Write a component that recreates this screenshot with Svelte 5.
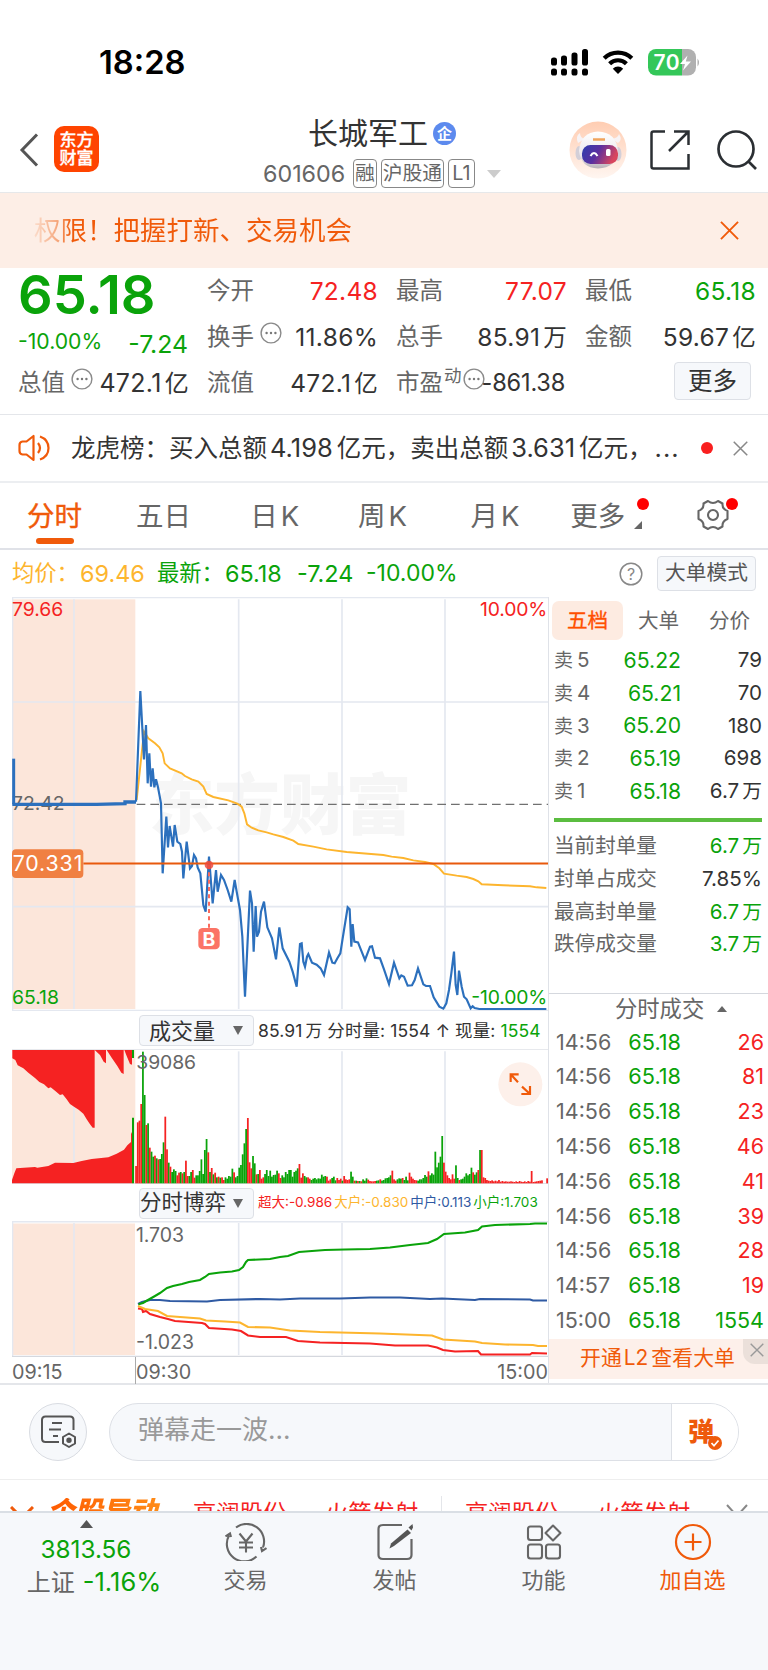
<script lang="ts">
  type Tone = 'up' | 'down' | 'plain';

  const quotes: { label: string; value: string; tone: Tone; info?: boolean; sup?: string }[][] = [
    [
      { label: '今开', value: '72.48', tone: 'up' },
      { label: '换手', value: '11.86%', tone: 'plain', info: true },
      { label: '流值', value: '472.1亿', tone: 'plain' }
    ],
    [
      { label: '最高', value: '77.07', tone: 'up' },
      { label: '总手', value: '85.91万', tone: 'plain' },
      { label: '市盈', value: '-861.38', tone: 'plain', info: true, sup: '动' }
    ],
    [
      { label: '最低', value: '65.18', tone: 'down' },
      { label: '金额', value: '59.67亿', tone: 'plain' }
    ]
  ];

  const asks = [
    ['5', '65.22', '79'],
    ['4', '65.21', '70'],
    ['3', '65.20', '180'],
    ['2', '65.19', '698'],
    ['1', '65.18', '6.7万']
  ];

  const limits: [string, string, Tone][] = [
    ['当前封单量', '6.7万', 'down'],
    ['封单占成交', '7.85%', 'plain'],
    ['最高封单量', '6.7万', 'down'],
    ['跌停成交量', '3.7万', 'down']
  ];

  const trades: [string, string, Tone][] = [
    ['14:56', '26', 'up'],
    ['14:56', '81', 'up'],
    ['14:56', '23', 'up'],
    ['14:56', '46', 'up'],
    ['14:56', '41', 'up'],
    ['14:56', '39', 'up'],
    ['14:56', '28', 'up'],
    ['14:57', '19', 'up'],
    ['15:00', '1554', 'down']
  ];

  const gridX = [222, 716, 1026, 1335];

  // chart units are a third of a pixel
  const priceLine =
    '408,635 421,303 432,508 438,405 443,580 448,490 453,590 458,535 463,592 468,568 474,592 483,640 488,850 499,680 504,772 509,708 519,770 524,705 532,755 541,762 546,785 550,865 560,755 570,835 576,828 582,795 588,805 593,832 601,850 610,945 617,965 627,800 638,940 648,840 653,905 663,855 672,870 683,900 694,935 704,870 710,905 720,960 727,1040 735,1220 750,902 756,940 761,1085 767,948 771,1040 777,1025 783,965 792,935 802,1012 816,1045 828,1108 838,1012 848,1075 868,1115 878,1145 890,1190 900,1062 905,1060 910,1115 915,1130 921,1100 925,1092 936,1118 950,1124 962,1135 972,1155 987,1088 997,1118 1004,1120 1013,1103 1021,1090 1028,1045 1043,952 1049,958 1054,1070 1058,1002 1063,1055 1074,1057 1085,1085 1095,1110 1110,1070 1116,1069 1125,1103 1140,1105 1152,1138 1167,1182 1182,1118 1198,1165 1204,1156 1212,1160 1223,1187 1236,1186 1244,1170 1254,1135 1270,1183 1278,1188 1290,1188 1301,1222 1318,1250 1330,1256 1339,1240 1347,1200 1354,1150 1362,1085 1367,1185 1372,1215 1377,1142 1385,1190 1392,1220 1400,1228 1412,1255 1418,1249 1424,1254 1438,1257 1639,1257';
  const averageLine =
    '410,630 432,425 445,445 465,460 478,472 488,490 494,520 510,535 545,550 555,558 575,568 595,575 610,590 620,612 640,621 685,631 712,641 725,650 733,670 741,703 755,713 775,721 800,727 820,733 850,741 880,752 895,762 940,770 980,778 1040,786 1150,795 1175,800 1210,804 1240,811 1275,816 1300,822 1318,835 1332,851 1370,857 1400,861 1420,867 1435,874 1445,883 1510,886 1590,889 1610,892 1639,894';

  // one bar per minute, negative means the price fell
  const volumes = [
    52, 183, 188, 238, -395, -265, 175, -180, 107, -95, -80, 83, -75, 72, -73, -88, -123, 200, 102, -62,
    50, -34, -42, -37, 24, 32, -34, 30, -34, 68, 22, -22, -34, 40, 17, -24, -24, -37, -72, -28,
    -100, -133, 93, -34, 46, -27, 32, -18, 20, -17, 18, 10, -18, -14, -22, -20, -44, 33, -18, -22,
    -47, -55, -87, -120, -163, 196, 63, 45, -82, -60, 27, -28, 40, 14, 18, -28, -40, -22, -38, -20,
    -25, -26, -38, 30, 16, -24, -18, -34, -28, -40, -40, -20, -34, -38, -45, 58, 17, 30, -22, -18,
    18, 14, -10, -14, -16, -12, -15, -14, -26, -20, -22, 20, 8, 12, -16, -20, -9, 16, 10, 14,
    -8, 22, 12, 10, 12, -35, -20, 8, -8, 7, -7, 6, -12, -8, -15, 11, 7, 6, 6, 7,
    -8, -9, 12, -8, -10, -15, -16, -18, -24, 38, 12, 8, -12, -15, -14, 16, -10, -20, -9, 32,
    20, 14, 10, 9, -8, -12, -12, -16, -25, -20, 36, -24, -30, -26, -95, -48, -62, -80, -142, 62,
    35, 24, 16, 12, 27, 14, -54, -16, 10, -12, -14, -20, -30, -24, -28, -47, 33, -26, -33, 40,
    -100, 100, 18, 16, 10, 8, 7, 9, 6, 8, 6, 10, 5, 7, 5, 6, 5, 5, 6, 5,
    4, 6, 4, 7, 5, 4, 6, 4, 7, 5, 37, 4, 5, 6, 7, 8, 9, 0, 0, 15
  ];

  const flows = [
    {
      color: '#2f5aa3',
      points:
        '138,114 142,112 150,110 160,110 170,111 207,111.5 220,110 260,109 280,109.5 300,108.5 340,108.5 370,107.5 400,107.5 430,109 442,108.5 475,110 480,109 530,109.5 533,110.5 547,110.5'
    },
    {
      color: '#f52222',
      points:
        '138,118.5 142,119 143,122 146,121 150,124 160,127 168,129 175,131 202,133 205,134 209,138 232,139.5 241,141 248,145.5 260,147 286,147 298,151 320,152.5 370,153.5 395,155.5 428,155.5 437,157.5 443,160 455,161.5 478,161 481,164.5 530,164.5 532,163 547,163.5'
    },
    {
      color: '#fdb52e',
      points:
        '138,116 145,119 158,121 167,126 180,127 200,128.5 206,130.5 225,131.5 240,132.5 248,137 270,137.5 290,140.5 320,142 380,143.5 432,145.5 443,149.5 475,151.5 482,153 505,154.5 533,155 538,156 547,156'
    },
    {
      color: '#0aa30a',
      points:
        '138.5,114.3 143,113 148,110 155,106 160,103 167,98 173,96 182,94 189,92 200,90 205,87 209,84 220,82.5 232,81.5 239,80 243,77 246,72 248,70 270,69 280,67 288,66 299,62 325,60 345,59.5 370,59 390,57.5 410,55 428,53 437,49 444,44 465,42.5 478,40 482,36.5 495,35 530,34 535,33.5 547,33.5'
    }
  ];
</script>

{#snippet dots()}
  <svg class="dots" viewBox="0 0 22 22" width="22" height="22">
    <circle cx="11" cy="11" r="9.9" fill="none" stroke="#8a8a8a" stroke-width="1.4" />
    <g fill="#777"><circle cx="6.6" cy="11" r="1.2" /><circle cx="11" cy="11" r="1.2" /><circle cx="15.4" cy="11" r="1.2" /></g>
  </svg>
{/snippet}

{#snippet cross(size: number, color: string, width: number)}
  <svg viewBox="0 0 20 20" width={size} height={size}>
    <path d="M1 1 19 19M19 1 1 19" stroke={color} stroke-width={width} fill="none" />
  </svg>
{/snippet}

{#snippet amount(value: string)}
  {#if /[万亿]$/.test(value)}{value.slice(0, -1)}<em class="unit">{value.slice(-1)}</em>{:else}{value}{/if}
{/snippet}

<div class="phone">
  <div class="status-bar">
    <span class="clock">18:28</span>
    <svg class="signal" viewBox="0 0 37 27" width="37" height="27">
      <rect x="0" y="8.5" width="6" height="8" rx="2.6" /><rect x="10" y="6.5" width="6" height="10" rx="2.6" />
      <rect x="20.5" y="3.5" width="6" height="13" rx="2.6" /><rect x="31" y="0" width="6" height="16.5" rx="2.6" />
      <rect x="0" y="19.5" width="6" height="7" rx="2.6" /><rect x="10" y="19.5" width="6" height="7" rx="2.6" />
      <rect x="20.5" y="19.5" width="6" height="7" rx="2.6" /><rect x="31" y="19.5" width="6" height="7" rx="2.6" />
    </svg>
    <svg class="wifi" viewBox="0 0 32 24" width="32" height="24">
      <path d="M2.2 8.2a19.7 19.7 0 0 1 27.6 0M7.6 13.7a12 12 0 0 1 16.8 0" fill="none" stroke="#000" stroke-width="4.2" />
      <path d="M16 24l-5.2-5.3a7.4 7.4 0 0 1 10.4 0z" />
    </svg>
    <svg class="battery" viewBox="0 0 53 27" width="53" height="27">
      <defs><clipPath id="cell"><rect width="48" height="26.5" rx="8" /></clipPath></defs>
      <g clip-path="url(#cell)"><rect width="34" height="27" fill="#34c759" /><rect x="34" width="14" height="27" fill="#b0b0b0" /></g>
      <path d="M49.5 9.5q3 4 0 8z" fill="#b0b0b0" />
      <text x="5.5" y="20.7" fill="#fff" font-size="21" font-weight="600" textLength="26">70</text>
      <path d="M39.5 6.5 32 15h5l-2 6.5 8-9h-5.2z" fill="#fff" />
    </svg>
  </div>

  <header>
    <svg class="back" viewBox="0 0 20 34" width="20" height="34">
      <path d="M18 1.5 3 17l15 15.5" fill="none" stroke="#555" stroke-width="3" />
    </svg>
    <div class="logo"><span>东方</span><span>财富</span></div>
    <div class="title">
      <div class="name">长城军工<i>企</i></div>
      <div class="code">
        <span class="num">601606</span><b>融</b><b>沪股通</b><b class="l1">L1</b>
        <svg viewBox="0 0 14 8" width="14" height="8"><path d="M0 0h14L7 8z" fill="#ccc" /></svg>
      </div>
    </div>
    <svg class="robot" viewBox="0 0 58 58" width="58" height="58">
      <defs>
        <linearGradient id="halo" x1="0" y1="0" x2="0" y2="1"><stop offset="0" stop-color="#ffcdb2" /><stop offset="1" stop-color="#fff6f1" /></linearGradient>
        <linearGradient id="visor" x1="0" y1="0" x2="1" y2=".3"><stop offset="0" stop-color="#2d3fae" /><stop offset=".5" stop-color="#5a2fa0" /><stop offset="1" stop-color="#d8465e" /></linearGradient>
        <linearGradient id="shell" x1="0" y1="0" x2="0" y2="1"><stop offset="0" stop-color="#fff" /><stop offset=".65" stop-color="#ebe8ec" /><stop offset="1" stop-color="#b9b2b8" /></linearGradient>
      </defs>
      <circle cx="29" cy="29" r="28.5" fill="url(#halo)" />
      <path d="M9 22q-3-7 2-10 0 5 5 6zM49 22q5-3 1-9-1 4-7 5z" fill="#f7f3f5" />
      <ellipse cx="10" cy="32" rx="3.5" ry="7" fill="#d3cfd8" /><ellipse cx="49" cy="33" rx="3.5" ry="7" fill="#d3cfd8" />
      <path d="M10 30Q12 11 29 10.5 47 11 49 30 47 47 29 47.5 12 47 10 30z" fill="url(#shell)" />
      <rect x="13" y="24" width="36" height="19" rx="8.5" fill="url(#visor)" />
      <path d="M21.5 35q3.5-6 7 0" fill="none" stroke="#fff" stroke-width="2" /><rect x="37" y="28" width="4.5" height="7" rx="1.5" fill="#fff" />
      <path d="M24 18.500h12" stroke="#f0a45d" stroke-width="2.5" />
    </svg>
    <svg class="share" viewBox="0 0 40 40" width="40" height="40">
      <path d="M15 1.5H3.5Q1.500 1.500 1.500 3.500V36.500Q1.500 38.500 3.500 38.500H38.500V24M24 1.500h14.500V15M38 2 19 21" fill="none" stroke="#2b2f33" stroke-width="2.5" />
    </svg>
    <svg class="search" viewBox="0 0 40 40" width="40" height="40">
      <circle cx="19" cy="19" r="17.5" fill="none" stroke="#2b2f33" stroke-width="2.7" /><path d="m31 31 8 8" stroke="#2b2f33" stroke-width="2.7" />
    </svg>
  </header>

  <div class="notice">
    <span>权限！把握打新、交易机会</span>
    {@render cross(19, '#f05a0a', 2)}
  </div>

  <section class="quote">
    <div class="col first">
      <div class="last down">65.18</div>
      <div class="change down"><span>-10.00%</span><span class="diff">-7.24</span></div>
      <div class="cell"><span class="key">总值</span>{@render dots()}<span class="val">{@render amount('472.1亿')}</span></div>
    </div>
    {#each quotes as col, i}
      <div class="col">
        {#each col as q}
          <div class="cell">
            <span class="key">{q.label}</span>{#if q.sup}<sup>{q.sup}</sup>{/if}{#if q.info}{@render dots()}{/if}
            <span class="val {q.tone}" class:tight={q.sup}>{@render amount(q.value)}</span>
          </div>
        {/each}
        {#if i === 2}<button class="more">更多</button>{/if}
      </div>
    {/each}
  </section>

  <div class="news">
    <svg viewBox="0 0 33 28" width="33" height="28" fill="none" stroke="#f05a0a" stroke-width="2.2">
      <path d="M15.5 2v24L8.5 20.5h-4Q1.500 20 1.500 17v-6q0-3 3-3.500h4z" stroke-linejoin="round" />
      <path d="M20 9q4 5 0 10M22 2.500q8.500 3 8.500 11.500T22 25.500" />
    </svg>
    <span class="headline">龙虎榜：买入总额<em>4.198</em>亿元，卖出总额<em>3.631</em>亿元，<em class="rest">...</em></span>
    <span class="red-dot"></span>
    {@render cross(15, '#888', 2)}
  </div>

  <nav class="tabs">
    <span class="active" style:width="109px">分时</span>
    <span style:width="114.3px">五日</span>
    <span style:width="107.7px">日<em>K</em></span>
    <span style:width="112.5px">周<em>K</em></span>
    <span style:width="99.8px">月<em>K</em></span>
    <span class="tab-more">更多<svg viewBox="0 0 8 8" width="8" height="8"><path d="M8 0v8H0z" fill="#666" /></svg><i></i></span>
    <span class="gear">
      <svg viewBox="-16 -16 32 32" width="32" height="32" fill="none" stroke="#666" stroke-width="2.1" stroke-linejoin="round">
        <path d="M-5-14Q0-10 5-14L9.5-11.5Q9-6 14.5-4V4Q9 6 9.5 11.5L5 14Q0 10-5 14L-9.500 11.500Q-9 6-14.500 4V-4Q-9-6-9.500-11.500Z" />
        <circle r="5" />
      </svg><i></i>
    </span>
  </nav>

  <div class="summary">
    <span class="avg name-tag">均价：</span><span class="avg n1">69.46</span>
    <span class="down name-tag">最新：</span><span class="down n2">65.18</span><span class="down n3">-7.24</span><span class="down n4">-10.00%</span>
    <svg viewBox="0 0 24 24" width="24" height="24">
      <circle cx="12" cy="12" r="10.8" fill="none" stroke="#888" stroke-width="1.5" />
      <text x="12" y="17.5" text-anchor="middle" font-size="16" fill="#888">?</text>
    </svg>
    <button>大单模式</button>
  </div>

  <main>
    <div class="charts">
      <svg viewBox="36 21 1608 1242" width="536" height="414">
        <rect x="36" y="28" width="370" height="1229" fill="#fce6da" />
        <text x="446" y="718" class="watermark" textLength="788">东方财富</text>
        <g stroke="#e4e8f0" stroke-width="5" fill="none">
          <path d="M36 336H1644M36 950H1644M36 22H1644M37.5 22V1262M36 1262H1644" />
          {#each gridX as x}<path d="M{x} 28V1257" />{/each}
        </g>
        <path d="M410 643H1644" stroke="#707070" stroke-width="4" stroke-dasharray="26 15" />
        <text x="36" y="661" fill="#666">72.42</text>
        <polyline points={averageLine} fill="none" stroke="#fdb52e" stroke-width="5.8" />
        <path d="M41 506V643" stroke="#2c70bd" stroke-width="9" />
        <path d="M37 643H290L375 641V636H408" fill="none" stroke="#2c70bd" stroke-width="10" />
        <polyline points={priceLine} fill="none" stroke="#2c70bd" stroke-width="6.5" />
        <path d="M250 820.5H1644" stroke="#e8590c" stroke-width="6.5" />
        <rect x="36" y="778" width="214" height="86" rx="12" fill="#f08042" />
        <text x="38" y="844" class="cost" textLength="209">70.331</text>
        <path d="M627 825V1014" stroke="#fb6a5c" stroke-width="6" stroke-dasharray="12 10" />
        <circle cx="627" cy="825" r="13" fill="#ef4a3c" opacity=".85" />
        <rect x="595" y="1014" width="64" height="64" rx="13" fill="#fb7466" />
        <text x="627" y="1067" class="buy">B</text>
        <text x="36" y="77" fill="#f52222">79.66</text>
        <text x="36" y="1243" fill="#0aa30a">65.18</text>
        <text x="1642" y="77" fill="#f52222" text-anchor="end" textLength="202">10.00%</text>
        <text x="1642" y="1243" fill="#0aa30a" text-anchor="end" textLength="228">-10.00%</text>
      </svg>

      <div class="chart-head">
        <button>成交量<svg viewBox="0 0 10 9" width="10" height="9"><path d="M0 0h10L5 9z" fill="#666" /></svg></button>
        <span class="lot-line">85.91<em class="unit">万</em> 分时量: 1554 ↑ 现量: <b class="down">1554</b></span>
      </div>

      <svg viewBox="36 117 1608 405" width="536" height="135">
        <rect x="36" y="120" width="370" height="400" fill="#fce6da" />
        <g stroke="#e4e8f0" stroke-width="5">
          {#each gridX as x}<path d="M{x} 124V520" />{/each}
        </g>
        <path d="M36 117.5H1644M36 521H1644" stroke="#dfe2e8" stroke-width="4" />
        <g fill="#f52222">
          <path d="M37 120V145L46 150 53 166 70 175 85 188 105 204 118 216 132 223 145 235 152 232 165 242 180 255 188 253 200 268 210 282 222 290 236 299 250 311 260 328 270 343 278 353H284V120Z" />
          <path d="M284 120 300 135 311 155 318 160V120Z" />
          <path d="M320 120 335 143 352 168 364 188 371 192V120Z" />
          <path d="M373 120 380 138 390 162 396 164V120Z" />
          <path d="M36 520V510L43 490 49 475 105 471 112 473 145 468 165 458 220 459 245 453 275 447 325 442 350 431 372 419 382 406 393 396V372L397 364V520Z" />
        </g>
        <path d="M396 120h6v24h-6zM396 323h6v197h-6z" fill="#0aa30a" />
        {#each volumes as v, i}
          <rect x={405.5 + i * 5.16} y={520 - Math.abs(v)} width="5.3" height={Math.abs(v)} fill={v < 0 ? '#0aa30a' : '#f52222'} />
        {/each}
        <text x="409" y="178" fill="#666" textLength="179">39086</text>
        <circle cx="1561" cy="223" r="66" fill="#fdf0ea" />
        <path d="M1532 216V193H1556M1532 193 1554 217M1564 252H1590V228M1590 252 1566 230" fill="none" stroke="#f05a0a" stroke-width="6.5" />
      </svg>

      <div class="chart-head flow">
        <button>分时博弈<svg viewBox="0 0 10 9" width="10" height="9"><path d="M0 0h10L5 9z" fill="#666" /></svg></button>
        <span class="legend">
          <b class="up">超大:-0.986</b><b class="avg">大户:-0.830</b><b class="mid">中户:0.113</b><b class="down">小户:1.703</b>
        </span>
      </div>

      <svg viewBox="12 31 536 136" width="536" height="136">
        <rect x="12" y="33.5" width="123" height="131.5" fill="#fce6da" />
        <g stroke="#e4e8f0" stroke-width="1.6">
          {#each gridX as x}<path d="M{x / 3} 33V165" />{/each}
          <path d="M12 31.8H548M12.5 31V166" />
        </g>
        <path d="M12 166.3H548" stroke="#d5d8de" stroke-width="1.3" />
        {#each flows as line}
          <polyline points={line.points} fill="none" stroke={line.color} stroke-width="2.1" />
        {/each}
        <text x="136" y="52.3" class="small" fill="#666" textLength="48">1.703</text>
        <text x="136" y="159.3" class="small" fill="#666" textLength="58">-1.023</text>
      </svg>

      <div class="times"><span>09:15</span><span>09:30</span><span>15:00</span></div>
    </div>

    <aside>
      <div class="depth-tabs"><span class="active">五档</span><span>大单</span><span>分价</span></div>
      <div class="asks">
        {#each asks as [level, price, lots]}
          <div class="row"><span class="level">卖<em>{level}</em></span><span class="price">{price}</span><span class="lots">{@render amount(lots)}</span></div>
        {/each}
      </div>
      <div class="green-bar"></div>
      <div class="limits">
        {#each limits as [label, value, tone]}
          <div class="row"><span>{label}</span><span class="lots {tone}">{@render amount(value)}</span></div>
        {/each}
      </div>
      <div class="trade-title">分时成交<svg viewBox="0 0 10 6" width="10" height="6"><path d="M0 6h10L5 0z" fill="#666" /></svg></div>
      <div class="trades">
        {#each trades as [time, lots, tone]}
          <div class="row"><span class="time">{time}</span><span class="price">65.18</span><span class="lots {tone}">{lots}</span></div>
        {/each}
      </div>
      <div class="upsell"><span>开通<em>L2</em>查看大单</span><i>{@render cross(14, '#999', 2)}</i></div>
    </aside>
  </main>

  <div class="comment">
    <div class="round">
      <svg viewBox="0 0 36 34" width="36" height="34" fill="none" stroke="#555" stroke-width="2">
        <path d="M19 27H5.500Q2 27 2 23.500V5Q2 1.500 5.500 1.500H30Q33.500 1.500 33.500 5V15M12 8H22M9 14.500H21M13 21H18" />
        <path d="M29 18.500 35 22V28.500L29 32 23 28.500V22Z" stroke-linejoin="round" /><circle cx="29" cy="25.2" r="1.7" fill="#555" />
      </svg>
    </div>
    <div class="input">
      <span>弹幕走一波...</span>
      <div class="danmu">弹
        <svg viewBox="0 0 14 14" width="14" height="14"><circle cx="7" cy="7" r="7" fill="#ee5a0c" /><path d="m3.500 7 2.500 2.800L10.500 4.500" fill="none" stroke="#fff" stroke-width="1.7" /></svg>
      </div>
    </div>
  </div>

  <div class="ticker">
    <svg class="v1" viewBox="0 0 24 14" width="24" height="14"><path d="M1 1 12 12 23 1" fill="none" stroke="#f05a0a" stroke-width="3" /></svg>
    <strong>个股异动</strong>
    <span class="s1">高澜股份</span><span class="s2">火箭发射</span><span class="s3">高澜股份</span><span class="s4">火箭发射</span>
    <svg class="v2" viewBox="0 0 22 14" width="22" height="14"><path d="M1 1 11 12 21 1" fill="none" stroke="#888" stroke-width="2" /></svg>
  </div>

  <footer>
    <div class="index">
      <svg viewBox="0 0 13 8" width="13" height="8"><path d="M0 8h13L6.500 0z" fill="#555" /></svg>
      <span class="down">3813.56</span>
      <span>上证<em class="down">-1.16%</em></span>
    </div>
    <div class="item">
      <svg viewBox="0 0 42 38" width="42" height="38" fill="none" stroke="#666" stroke-width="2.1">
        <path d="M11 4.500A17.500 17.500 0 0 1 38 24.500M31.500 33.500A17.500 17.500 0 0 1 4 12.500M.5 13.500 5 10.500 6 14M41.500 25 37 28 36 24M14.500 10.500 21 18.500 27.500 10.500M21 18.500V29.500M14 19.500H28M14 24.500H28" />
      </svg>
      <span>交易</span>
    </div>
    <div class="item">
      <svg viewBox="0 0 36 38" width="36" height="38" fill="none" stroke="#666" stroke-width="2.2">
        <path d="M25 2H6Q1.500 2 1.500 6V32Q1.500 36 6 36H30Q34.500 36 34.500 32V16" />
        <path d="M30.500 6.500 34 10 17 23 12.500 25.500 14 20.500Z" fill="#555" stroke="none" /><path d="M31.500 4.500 35.500 1 36 4.500 34.500 7.500Z" fill="#555" stroke="none" />
      </svg>
      <span>发帖</span>
    </div>
    <div class="item">
      <svg viewBox="0 0 36 38" width="36" height="38" fill="none" stroke="#666" stroke-width="2.1" stroke-linejoin="round">
        <rect x="2" y="3.5" width="14" height="13.5" rx="2.5" /><rect x="2" y="21.5" width="14" height="14" rx="2.5" /><rect x="20" y="21.5" width="14" height="14" rx="2.5" />
        <path d="M27 2.500 34.500 10 27 17.500 19.500 10Z" />
      </svg>
      <span>功能</span>
    </div>
    <div class="item add">
      <svg viewBox="0 0 38 38" width="38" height="38" fill="none" stroke="#f05a0a" stroke-width="2.2">
        <circle cx="19" cy="19" r="17" /><path d="M10.500 19H27.500M19 10.500V27.500" />
      </svg>
      <span>加自选</span>
    </div>
  </footer>
</div>

<style>
  :global(body) {
    margin: 0;
    background: #fff;
  }

  .phone {
    width: 768px;
    height: 1670px;
    overflow: hidden;
    background: #fff;
    color: #333;
    font-family: Inter, 'Noto Sans CJK SC', sans-serif;
    font-size: 24px;
    line-height: 1;
    white-space: nowrap;
  }

  .phone *,
  .phone {
    box-sizing: border-box;
  }

  svg {
    display: block;
    flex: none;
  }

  em,
  i {
    font-style: normal;
  }

  button {
    padding: 0;
    border: 1.5px solid #dde0e6;
    border-radius: 4px;
    background: #f6f8fb;
    color: #333;
    font-family: inherit;
    line-height: 1;
    white-space: nowrap;
  }

  .unit {
    margin-left: 3px;
    font-size: 0.96em;
  }

  .up {
    color: #f52222;
  }

  .down {
    color: #0aa30a;
  }

  .avg {
    color: #fdb52e;
  }

  .mid {
    color: #2f5aa3;
  }

  .status-bar {
    display: flex;
    align-items: center;
    height: 124px;
    padding-left: 99px;
    color: #000;
  }

  .clock {
    width: 452px;
    padding-top: 1px;
    font-size: 32.7px;
    font-weight: 600;
  }

  .wifi {
    margin-left: 14px;
  }

  .battery {
    margin-left: 14px;
  }

  header {
    display: flex;
    align-items: center;
    height: 69px;
    padding: 0 0 17px 19px;
    border-bottom: 1px solid #e6e8ea;
  }

  .logo {
    display: flex;
    flex-direction: column;
    align-items: center;
    justify-content: center;
    gap: 1px;
    width: 45px;
    height: 46px;
    margin: -1px 0 0 15px;
    border-radius: 10px;
    background: #ff4400;
    color: #fff;
    font-size: 17px;
    font-weight: 500;
    -webkit-text-stroke: 0.3px #fff;
  }

  .title {
    width: 240px;
    margin: -6px 0 0 165px;
    align-self: flex-start;
  }

  .name {
    display: flex;
    align-items: center;
    gap: 5px;
    padding-left: 44px;
    font-size: 30px;
  }

  .name i {
    display: flex;
    align-items: center;
    justify-content: center;
    width: 23px;
    height: 23px;
    border-radius: 50%;
    background: #5c8aee;
    color: #fff;
    font-size: 15px;
    font-weight: 700;
  }

  .code {
    display: flex;
    align-items: center;
    gap: 4px;
    margin: 11px 0 0 -1px;
    color: #666;
  }

  .num {
    width: 86px;
    font-size: 23.3px;
  }

  .code b {
    height: 29px;
    padding: 0 1px;
    border: 1.5px solid #888;
    border-radius: 4px;
    font-size: 19.8px;
    font-weight: 400;
    line-height: 26px;
  }

  .code .l1 {
    padding: 0 3px;
  }

  .code svg {
    margin-left: 8px;
  }

  .robot {
    margin-left: 65px;
  }

  .share {
    margin-left: 23px;
  }

  .search {
    margin-left: 27px;
  }

  .notice {
    display: flex;
    align-items: center;
    justify-content: space-between;
    height: 75px;
    padding: 0 29px 0 34px;
    background: #fdeee6;
    color: #f05a0a;
    font-size: 26.5px;
  }

  .notice span {
    background: linear-gradient(90deg, #fbdccb 0, #f6ac84 22px, #f05a0a 38px);
    background-clip: text;
    color: transparent;
  }

  .quote {
    display: flex;
    gap: 19px;
    height: 146px;
    padding-left: 18px;
  }

  .col {
    display: flex;
    flex-direction: column;
    width: 170px;
  }

  .cell {
    display: flex;
    align-items: center;
    height: 46px;
    font-size: 23.5px;
  }

  .key {
    color: #666;
  }

  .val {
    margin: 0 -1px 0 auto;
    font-size: 24.5px;
    letter-spacing: 0.3px;
  }

  .first .val {
    font-size: 25px;
  }

  .val.tight {
    margin: 0 0 0 -3px;
    font-size: 23.6px;
    letter-spacing: -0.2px;
  }

  .dots {
    margin: -9px 0 0 6px;
  }

  sup {
    align-self: flex-start;
    margin: 7px 0 0 1px;
    font-size: 17.5px;
    line-height: 1;
    color: #666;
  }

  sup + .dots {
    margin-left: 1px;
  }

  .last {
    height: 59px;
    font-size: 54.2px;
    font-weight: 600;
    line-height: 52px;
  }

  .change {
    display: flex;
    align-items: center;
    justify-content: space-between;
    height: 33px;
    padding-bottom: 3px;
    font-size: 21.2px;
  }

  .diff {
    margin-top: 5px;
    font-size: 24.8px;
  }

  .more {
    width: 77px;
    height: 38px;
    margin: 2px 0 0 89px;
    font-size: 24.5px;
  }

  .news {
    display: flex;
    align-items: center;
    height: 69px;
    padding-left: 18px;
    border-top: 1.5px solid #e4e6ea;
    border-bottom: 2px solid #eceef1;
  }

  .headline {
    width: 630px;
    margin-left: 20px;
    font-size: 24.5px;
  }

  .headline em {
    margin: 0 4px 0 3px;
    font-size: 25.5px;
  }

  .headline .rest {
    margin: 0 0 0 2px;
    letter-spacing: 1px;
  }

  .red-dot {
    width: 12px;
    height: 12px;
    margin-right: 20px;
    border-radius: 50%;
    background: #f91f1f;
  }

  .tabs {
    display: flex;
    height: 67px;
    padding-left: 27px;
    border-bottom: 2px solid #e0e2e8;
    color: #666;
    font-size: 27.5px;
    line-height: 67px;
  }

  .tabs span {
    position: relative;
  }

  .tabs em {
    margin-left: 3px;
  }

  .tabs .active {
    color: #f05a0a;
    -webkit-text-stroke: 0.4px #f05a0a;
  }

  .tabs .active::after {
    content: '';
    position: absolute;
    left: 9px;
    bottom: 4px;
    width: 38px;
    height: 6px;
    border-radius: 3px;
    background: #f05a0a;
  }

  .tabs .tab-more {
    width: 126.7px;
  }

  .tab-more svg {
    position: absolute;
    left: 64px;
    top: 38px;
  }

  .tabs i {
    position: absolute;
    top: 15px;
    left: 67px;
    width: 12px;
    height: 12px;
    border-radius: 50%;
    background: #f00;
  }

  .gear svg {
    margin-top: 16px;
  }

  .gear i {
    left: 29px;
  }

  .summary {
    display: flex;
    align-items: center;
    height: 47px;
    padding-left: 12px;
    font-size: 23.4px;
  }

  .name-tag {
    width: 68px;
    font-size: 22.3px;
  }

  .n1 {
    width: 77px;
  }

  .n2 {
    width: 72px;
  }

  .n3 {
    width: 69px;
  }

  .n4 {
    font-size: 23px;
  }

  .summary svg {
    margin-left: auto;
  }

  .summary button {
    width: 99px;
    height: 35px;
    margin: 0 12px 0 14px;
    color: #555;
    font-size: 20.7px;
  }

  main {
    display: flex;
    height: 788px;
    padding-left: 12px;
    border-bottom: 2px solid #e4e6ea;
  }

  .charts {
    width: 536px;
  }

  .charts text {
    font-size: 58px;
  }

  .charts .watermark {
    font-size: 197px;
    font-weight: 900;
    fill: #f6f6f6;
  }

  .charts .cost {
    font-size: 64px;
    fill: #fff;
  }

  .charts .buy {
    font-size: 58px;
    font-weight: 700;
    fill: #fff;
    text-anchor: middle;
  }

  .charts .small {
    font-size: 19.5px;
  }

  .chart-head {
    display: flex;
    align-items: center;
    height: 38px;
    padding: 1px 0 0 127px;
  }

  .chart-head button {
    display: flex;
    align-items: center;
    justify-content: space-between;
    width: 115px;
    height: 31px;
    padding: 0 10px 0 9px;
    font-size: 22px;
  }

  .chart-head span {
    margin-left: 4px;
  }

  .lot-line {
    padding-top: 1px;
    font-size: 17.5px;
    letter-spacing: 0.1px;
  }

  .chart-head b {
    font-weight: 400;
  }

  .flow {
    height: 37px;
  }

  .flow button {
    padding-left: 0;
    font-size: 21.5px;
  }

  .chart-head .legend {
    display: flex;
    gap: 2px;
    font-size: 13.5px;
  }

  .times {
    display: flex;
    height: 27px;
    color: #666;
    font-size: 19.8px;
    line-height: 31px;
  }

  .times span:first-child {
    width: 124px;
    border-right: 1px solid #aaa;
  }

  .times span:last-child {
    margin-left: auto;
  }

  aside {
    width: 220px;
    border-left: 1px solid #dfe2e8;
    color: #666;
    font-size: 20.6px;
  }

  .depth-tabs {
    display: flex;
    padding: 4px 0 0 3px;
  }

  .depth-tabs span {
    width: 71px;
    height: 39px;
    border-radius: 7px;
    line-height: 39px;
    text-align: center;
  }

  .depth-tabs .active {
    background: #fdebe1;
    color: #ff5000;
    -webkit-text-stroke: 0.3px #ff5000;
  }

  .asks {
    padding-top: 4px;
  }

  .row {
    display: flex;
    align-items: center;
    height: 32.8px;
    padding: 0 6px 0 5px;
  }

  .level {
    width: 50px;
    font-size: 19px;
  }

  .level em {
    margin-left: 4px;
    font-size: 20.6px;
  }

  .price {
    width: 77px;
    color: #0aa30a;
    font-size: 21.2px;
    text-align: right;
  }

  .lots {
    flex: 1;
    text-align: right;
    color: #333;
  }

  .lots.up {
    color: #f52222;
  }

  .lots.down {
    color: #0aa30a;
  }

  .green-bar {
    height: 4px;
    margin: 10px 6px 8px 5px;
    background: #5bbd40;
  }

  .limits {
    height: 163px;
  }

  .trade-title {
    display: flex;
    align-items: center;
    gap: 13px;
    height: 32px;
    padding-left: 66px;
    border-top: 1.5px solid #d5d8de;
    font-size: 22.3px;
  }

  .trades .row {
    height: 34.8px;
    padding: 0 4px 0 7px;
    font-size: 21.5px;
  }

  .trades .time {
    width: 57px;
  }

  .trades .price {
    width: 68px;
    font-size: 21.7px;
  }

  .upsell {
    position: relative;
    height: 40px;
    margin-top: 1px;
    padding-left: 31px;
    background: #fdf0ea;
    color: #f05a0a;
    font-size: 20.9px;
    line-height: 37px;
  }

  .upsell em {
    margin: 0 3px 0 2px;
  }

  .upsell i {
    position: absolute;
    top: 0;
    right: 0;
    width: 25px;
    height: 25px;
    padding: 4px 0 0 7px;
    border-bottom-left-radius: 12px;
    background: #ebe0da;
  }

  .comment {
    display: flex;
    align-items: center;
    height: 95px;
    padding-left: 29px;
    border-bottom: 1px solid #eee;
  }

  .round {
    display: flex;
    align-items: center;
    justify-content: center;
    width: 58px;
    height: 58px;
    border: 1px solid #d9dce2;
    border-radius: 50%;
    background: #f6f8fb;
  }

  .input {
    display: flex;
    width: 630px;
    height: 58px;
    margin-left: 22px;
    overflow: hidden;
    border: 1.5px solid #dde0e6;
    border-radius: 29px;
    background: #f6f8fb;
    color: #999;
    font-size: 26px;
    line-height: 52px;
  }

  .input span {
    width: 561px;
    padding-left: 28px;
  }

  .danmu {
    position: relative;
    flex: 1;
    padding-left: 16px;
    border-left: 1.5px solid #dde0e6;
    background: #fff;
    color: #ee5a0c;
    font-weight: 900;
    line-height: 55px;
  }

  .danmu svg {
    position: absolute;
    left: 36px;
    top: 32px;
  }

  .ticker {
    display: flex;
    height: 31px;
    overflow: hidden;
    padding: 22px 0 0 10px;
    color: #f52222;
    font-size: 23.3px;
  }

  .v1 {
    margin-top: 4px;
  }

  .ticker strong {
    width: 146px;
    margin: -4px 0 0 13px;
    padding-bottom: 10px;
    background: linear-gradient(90deg, #ff5a00, #ff9a1e);
    background-clip: text;
    color: transparent;
    font-size: 27.5px;
    font-style: italic;
    font-weight: 900;
  }

  .s1,
  .s3 {
    width: 132px;
  }

  .s2 {
    width: 117px;
    height: 30px;
    margin: -6px 23px 0 0;
    padding-top: 6px;
    border-right: 1.5px solid #e4e6ea;
  }

  .s4 {
    width: 129px;
  }

  .v2 {
    margin-top: 2px;
  }

  footer {
    display: flex;
    height: 161px;
    border-top: 2px solid #dadfe5;
    background: #f6f8fb;
    color: #666;
    font-size: 22px;
  }

  .index {
    display: flex;
    flex-direction: column;
    align-items: center;
    width: 171px;
    padding: 7px 0 0 17px;
    font-size: 24px;
  }

  .index svg {
    margin-right: 15px;
  }

  .index > .down {
    margin: 9px 16px 8px 0;
    font-size: 24.3px;
  }

  .index em {
    margin-left: 8px;
    font-size: 25.5px;
  }

  .item {
    display: flex;
    flex-direction: column;
    align-items: center;
    width: 149px;
    padding-top: 10px;
  }

  .item span {
    margin-top: 8px;
  }

  .add {
    color: #f05a0a;
  }
</style>
